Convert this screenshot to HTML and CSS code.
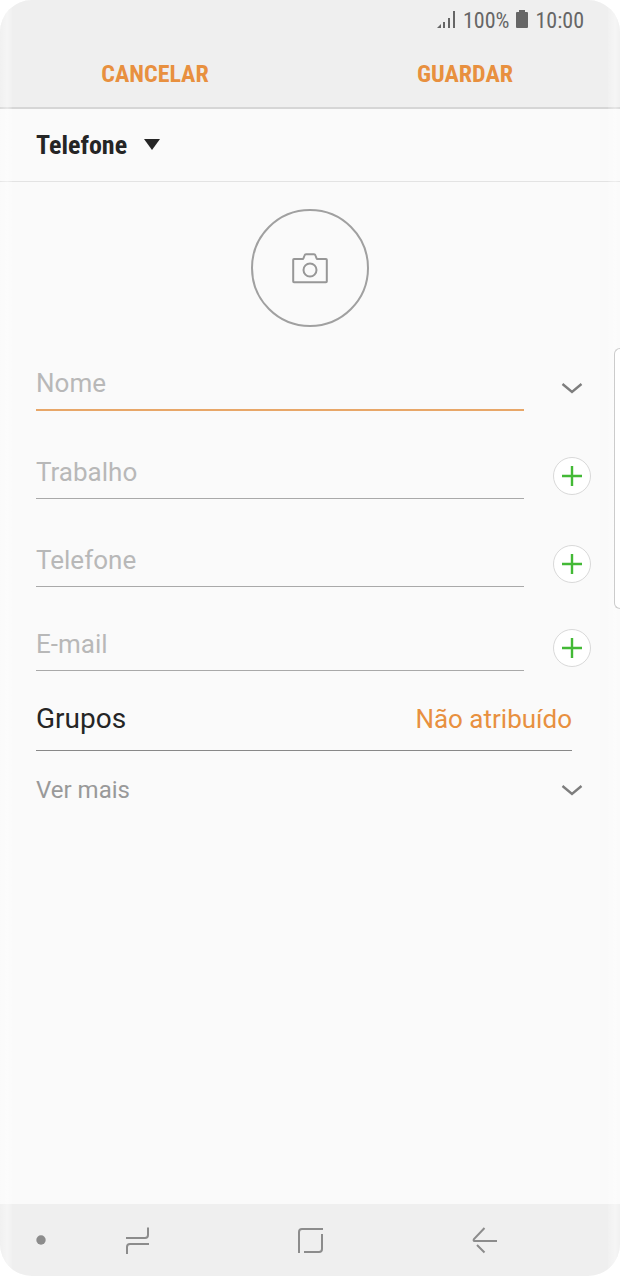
FILE: index.html
```html
<!DOCTYPE html>
<html lang="pt">
<head>
  <meta charset="UTF-8">
  <meta name="viewport" content="width=device-width, initial-scale=1.0">
  <title>Contacto</title>
  <link rel="stylesheet" href="styles.css">
</head>
<body>
<div class="phone">
  <header class="top">
    <div class="status">
      <svg class="signal" viewBox="0 0 20 20" width="20" height="20">
        <path d="M0 18l4-4V18zM6 12h2v6H6zM11 8H13V18h-2zM16 1H18V18H16z"/>
      </svg>
      <span>100%</span>
      <svg class="battery" viewBox="0 0 14 20" width="14" height="20">
        <path d="M4 0h6v2h2a1 1 0 0 1 1 1v14a1 1 0 0 1-1 1H2a1 1 0 0 1-1-1V3a1 1 0 0 1 1-1h2z"/>
      </svg>
      <span>10:00</span>
    </div>
    <div class="actions">
      <button type="button">CANCELAR</button>
      <button type="submit" form="contact">GUARDAR</button>
    </div>
  </header>

  <div class="storage">
    <select id="storage" aria-label="Guardar em">
      <option>Telefone</option>
    </select>
    <svg viewBox="0 0 16 12" width="16" height="12"><path d="M0 0h16L8 11z"/></svg>
  </div>

  <main>
    <button type="button" class="photo" aria-label="Adicionar foto">
      <svg viewBox="0 0 36 32" width="36" height="32">
        <path d="M2 7h8.500q.8 0 1-.8L12.500 3.500q.4-1.200 1.500-1.200h8q1.100 0 1.500 1.200l1 2.700q.2.800 1 .8H34q.8 0 .8.800V29.500q0 .8-.8.800H2q-.8 0-.8-.8V7.800Q1.200 7 2 7z"/>
        <circle cx="18" cy="18" r="6.500"/>
      </svg>
    </button>

    <form id="contact">
      <div class="field active">
        <input type="text" placeholder="Nome" aria-label="Nome">
        <button type="button" class="more" aria-label="Expandir nome">
          <svg viewBox="0 0 22 14" width="22" height="14"><path d="M1.500 3l9.500 8 9.500-8"/></svg>
        </button>
      </div>
      <div class="field">
        <input type="text" placeholder="Trabalho" aria-label="Trabalho">
        <button type="button" class="add" aria-label="Adicionar trabalho">
          <svg viewBox="0 0 20 20" width="20" height="20"><path d="M10 0v20M0 10h20"/></svg>
        </button>
      </div>
      <div class="field">
        <input type="tel" placeholder="Telefone" aria-label="Telefone">
        <button type="button" class="add" aria-label="Adicionar telefone">
          <svg viewBox="0 0 20 20" width="20" height="20"><path d="M10 0v20M0 10h20"/></svg>
        </button>
      </div>
      <div class="field email">
        <input type="email" placeholder="E-mail" aria-label="E-mail">
        <button type="button" class="add" aria-label="Adicionar e-mail">
          <svg viewBox="0 0 20 20" width="20" height="20"><path d="M10 0v20M0 10h20"/></svg>
        </button>
      </div>
      <div class="groups">
        <label for="groups">Grupos</label>
        <button type="button" id="groups">Não atribuído</button>
      </div>
      <button type="button" class="see-more">
        <span>Ver mais</span>
        <span class="more">
          <svg viewBox="0 0 22 14" width="22" height="14"><path d="M1.500 3l9.500 8 9.500-8"/></svg>
        </span>
      </button>
    </form>
  </main>

  <nav class="navbar">
    <button type="button" class="dot" aria-label="Ocultar barra">
      <svg viewBox="0 0 10 10" width="10" height="10"><circle cx="5" cy="5" r="4.700"/></svg>
    </button>
    <button type="button" aria-label="Recentes">
      <svg viewBox="0 0 28 28" width="28" height="28"><path d="M4 12H23q3 0 3-3V1.500M27 18H8q-3 0-3 3V28"/></svg>
    </button>
    <button type="button" aria-label="Início">
      <svg viewBox="0 0 28 28" width="28" height="28"><path d="M3 27V6q0-3 3-3H27M26 8V23q0 3-3 3H8"/></svg>
    </button>
    <button type="button" aria-label="Voltar">
      <svg viewBox="0 0 28 28" width="28" height="28"><path d="M14.500 2L4 13q-1 2 .5 2H27M7 19l7.500 7.500"/></svg>
    </button>
  </nav>

  <div class="edge-handle"></div>
</div>
</body>
</html>
```

FILE: styles.css
```css
* {
  box-sizing: border-box;
}

body {
  margin: 0;
  background-color: white;
  font-family: Roboto, "Liberation Sans", sans-serif;
  color: #252525;
}

button, input, select {
  margin: 0;
  padding: 0;
  border: none;
  border-radius: 0;
  background: none;
  color: inherit;
  font: inherit;
  outline: none;
}

button {
  cursor: pointer;
}

svg {
  display: block;
  flex: none;
}

.phone {
  position: relative;
  display: flex;
  flex-direction: column;
  min-height: 100vh;
  border-radius: 32px;
  overflow: hidden;
  background-color: #fafafa;
}

/* light reflections of the curved screen */
.phone::before, .phone::after {
  content: "";
  position: absolute;
  top: 0;
  bottom: 0;
  left: 0;
  width: 12px;
  background: linear-gradient(to right, rgba(255, 255, 255, 0.1), rgba(255, 255, 255, 0.4) 60%, rgba(255, 255, 255, 0.1));
  pointer-events: none;
}

.phone::after {
  left: auto;
  right: 0;
}

.top {
  background-color: #efefef;
  border-bottom: 2px solid #d6d6d6;
  font-family: "Roboto Condensed", "Liberation Sans Narrow", Roboto, sans-serif;
}

.status {
  display: flex;
  align-items: center;
  justify-content: flex-end;
  gap: 6px;
  height: 40px;
  padding-right: 36px;
  color: #666;
  font-size: 22px;
}

.status svg {
  fill: #666;
}

.actions {
  display: grid;
  grid-template-columns: 1fr 1fr;
  height: 67px;
  color: #e8903f;
  font-size: 24px;
  font-weight: bold;
}

.storage {
  display: flex;
  align-items: center;
  gap: 16px;
  height: 73px;
  padding: 0 36px;
  border-bottom: 1px solid #e3e3e3;
}

.storage select {
  appearance: none;
  font-family: "Roboto Condensed", "Liberation Sans Narrow", Roboto, sans-serif;
  font-size: 26px;
  font-weight: bold;
}

.storage svg {
  fill: #252525;
}

main {
  flex: 1;
}

.photo {
  display: flex;
  align-items: center;
  justify-content: center;
  width: 118px;
  height: 118px;
  margin: 27px auto 32px;
  border: 2px solid #a0a0a0;
  border-radius: 50%;
}

.photo svg {
  fill: none;
  stroke: #979797;
  stroke-width: 2;
}

form {
  padding: 0 29px 0 36px;
}

.field {
  display: flex;
  align-items: flex-end;
  gap: 29px;
  margin-bottom: 36px;
}

.field:has(+ .email) {
  margin-bottom: 32px;
}

.field.email {
  margin-bottom: 16px;
}

.field input {
  flex: 1;
  min-width: 0;
  height: 52px;
  padding-bottom: 2px;
  border-bottom: 1px solid #a9a9a9;
  font-size: 26px;
}

.field input::placeholder {
  color: #b8b8b8;
  opacity: 1;
}

.field.active input {
  border-bottom: 2px solid #e8a768;
}

.more, .add {
  display: flex;
  align-items: center;
  justify-content: center;
  flex: none;
  width: 38px;
  height: 38px;
}

.field button {
  margin-bottom: 4px;
}

.more svg {
  fill: none;
  stroke: #7d7d7d;
  stroke-width: 2.4;
}

.add {
  border: 1px solid #d9d9d9;
  border-radius: 50%;
  background-color: white;
}

.add svg {
  fill: none;
  stroke: #43b936;
  stroke-width: 2.4;
}

.groups {
  display: flex;
  align-items: center;
  justify-content: space-between;
  height: 64px;
  margin-right: 19px;
  border-bottom: 1px solid #888;
  font-size: 28px;
}

.groups button {
  color: #e8903f;
  font-size: 26px;
}

.see-more {
  display: flex;
  align-items: center;
  justify-content: space-between;
  width: 100%;
  height: 78px;
  color: #999;
  font-size: 24px;
}

.navbar {
  display: grid;
  grid-template-columns: 8fr 28fr 28fr 28fr 8fr;
  align-items: center;
  height: 72px;
  background-color: #efefef;
}

.navbar button {
  display: flex;
  justify-content: center;
}

.navbar svg {
  fill: none;
  stroke: #8c8c8c;
  stroke-width: 2;
}

.navbar .dot {
  justify-content: flex-end;
  padding-right: 4px;
}

.navbar .dot svg {
  fill: #8c8c8c;
  stroke: none;
}

/* handle of the edge panel, over the right border */
.edge-handle {
  position: absolute;
  top: 348px;
  right: 0;
  width: 6px;
  height: 261px;
  border: 1px solid #ccc;
  border-right: none;
  border-radius: 8px 0 0 8px;
  background-color: white;
  z-index: 1;
}
```
